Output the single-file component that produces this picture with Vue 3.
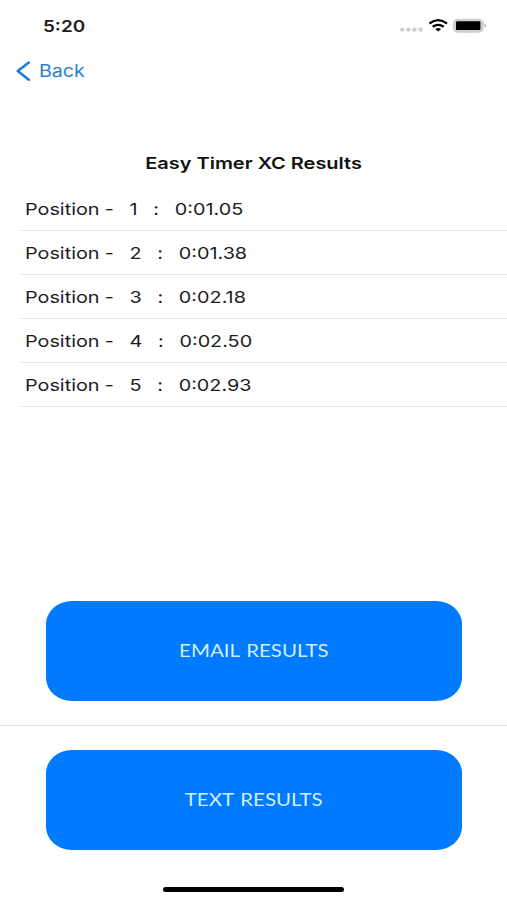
<script setup>
const results = [
  { position: 1, time: '0:01.05' },
  { position: 2, time: '0:01.38' },
  { position: 3, time: '0:02.18' },
  { position: 4, time: '0:02.50' },
  { position: 5, time: '0:02.93' },
]
const line = (r) => `Position -   ${r.position}   :   ${r.time}`
</script>

<template>
  <main class="screen">
    <header class="status">
      <span class="clock">5:20</span>
      <svg class="indicators" width="88" height="18" viewBox="0 0 88 18">
        <g fill="#cfcfcf">
          <rect x="1.2" y="11.8" width="4" height="3.8" rx="0.7" />
          <rect x="7.3" y="11.8" width="4" height="3.8" rx="0.7" />
          <rect x="13.4" y="11.8" width="4" height="3.8" rx="0.7" />
          <rect x="19.5" y="11.8" width="4" height="3.8" rx="0.7" />
        </g>
        <g fill="none" stroke="#000" stroke-width="2.3">
          <path d="M30.4 7.5Q39.2 .8 48 7.5" />
          <path d="M33.7 10.7Q39.2 6.9 44.7 10.7" />
        </g>
        <path d="M36.2 12.9Q39.2 10.9 42.2 12.9L39.2 15.4Z" />
        <rect x="54.8" y="3.6" width="29.2" height="12.2" rx="4" fill="#d2d2d2" stroke="#cecece" stroke-width="1.8" />
        <rect x="57" y="5.3" width="24.4" height="8.8" rx="1.2" />
        <path d="M85.6 8Q87.2 8.5 87.2 9.7Q87.2 10.9 85.6 11.4Z" fill="#aaa" />
      </svg>
    </header>
    <nav class="nav">
      <svg width="15" height="20" viewBox="0 0 15 20">
        <path d="M13.8 1.6L2.8 10.1L13.8 18.8" fill="none" stroke="#147adb" stroke-width="2.5" stroke-linecap="round" stroke-linejoin="round" />
      </svg>
      <a class="back">Back</a>
    </nav>
    <h1 class="title"><span>Easy Timer XC Results</span></h1>
    <ul class="list">
      <li v-for="r in results" :key="r.position"><span>{{ line(r) }}</span></li>
    </ul>
    <section class="actions">
      <div class="action"><button><span>EMAIL RESULTS</span></button></div>
      <div class="action"><button><span>TEXT RESULTS</span></button></div>
    </section>
    <div class="home"></div>
  </main>
</template>

<style>
body { background: #fff; }
</style>

<style scoped>
.screen {
  display: flex;
  flex-direction: column;
  box-sizing: border-box;
  width: 507px;
  height: 900px;
  overflow: hidden;
  background: #fff;
  color: #1c1c1c;
  font-family: Inter, "Liberation Sans", sans-serif;
}
.status {
  display: flex;
  justify-content: space-between;
  align-items: flex-start;
  height: 52px;
  padding: 16px 20px 0 43px;
  box-sizing: border-box;
}
.clock {
  font-size: 16px;
  line-height: 20px;
  font-weight: 600;
  transform: scaleX(1.18);
  transform-origin: left;
}
.indicators { display: block; }
.nav {
  display: flex;
  align-items: center;
  gap: 9px;
  height: 38px;
  padding-left: 15px;
}
.back {
  color: #2b80d0;
  font-size: 17px;
  transform: scaleX(1.155);
  transform-origin: left;
}
.title {
  margin: 63px 0 0;
  height: 20px;
  line-height: 20px;
  font-size: 16.5px;
  font-weight: 600;
  text-align: center;
  color: #111;
}
.title span { display: inline-block; transform: scaleX(1.21); }
.list {
  margin: 14px 0 0 20px;
  padding: 0;
  list-style: none;
}
.list li {
  display: flex;
  align-items: center;
  box-sizing: border-box;
  height: 44.1px;
  padding-left: 5.1px;
  border-bottom: 1.5px solid #e6e6e6;
}
.list span {
  white-space: pre;
  font-size: 16.5px;
  word-spacing: -0.28px;
  transform: scaleX(1.2);
  transform-origin: left;
}
.actions {
  display: flex;
  flex-direction: column;
  margin-top: 169.8px;
}
.action {
  height: 149px;
  box-sizing: border-box;
  padding: 24px 45px 24px 46px;
}
.action:first-child { border-bottom: 1px solid #e2e2e2; }
button {
  display: flex;
  align-items: center;
  justify-content: center;
  width: 416px;
  height: 100px;
  padding: 0 0 3px;
  border: 0;
  border-radius: 26px / 23px;
  background: #007aff;
  color: #d3eeff;
  font-family: Lato, sans-serif;
  font-size: 18px;
}
button span {
  display: inline-block;
  word-spacing: 1.5px;
  transform: scaleX(1.135);
}
.home {
  width: 181px;
  height: 5px;
  margin: 12.2px 0 0 163px;
  border-radius: 3px;
  background: #000;
}
</style>
